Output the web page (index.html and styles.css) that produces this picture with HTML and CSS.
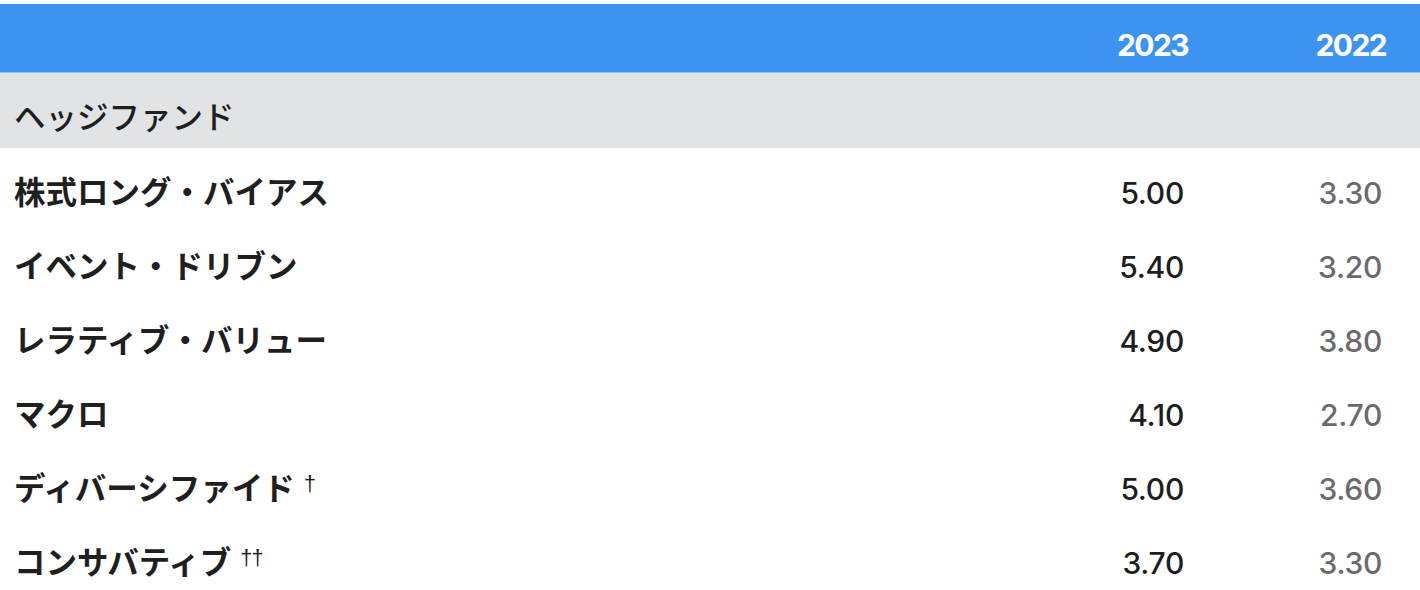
FILE: index.html
```html
<!DOCTYPE html>
<html lang="ja">
<head>
  <meta charset="UTF-8">
  <meta name="viewport" content="width=device-width, initial-scale=1.0">
  <title>ヘッジファンド</title>
  <link rel="stylesheet" href="styles.css">
</head>
<body>
  <div class="sheet">
    <div class="row head">
      <div class="label"></div>
      <div class="year">2023</div>
      <div class="year">2022</div>
    </div>

    <div class="row group">
      <div class="label">ヘッジファンド</div>
      <div></div>
      <div></div>
    </div>

    <div class="row">
      <div class="label">株式ロング・バイアス</div>
      <div class="num now">5.00</div>
      <div class="num prev">3.30</div>
    </div>
    <div class="row">
      <div class="label">イベント・ドリブン</div>
      <div class="num now">5.40</div>
      <div class="num prev">3.20</div>
    </div>
    <div class="row">
      <div class="label">レラティブ・バリュー</div>
      <div class="num now">4.90</div>
      <div class="num prev">3.80</div>
    </div>
    <div class="row">
      <div class="label">マクロ</div>
      <div class="num now">4.10</div>
      <div class="num prev">2.70</div>
    </div>
    <div class="row">
      <div class="label">ディバーシファイド<span class="mark">†</span></div>
      <div class="num now">5.00</div>
      <div class="num prev">3.60</div>
    </div>
    <div class="row">
      <div class="label">コンサバティブ<span class="mark">††</span></div>
      <div class="num now">3.70</div>
      <div class="num prev">3.30</div>
    </div>
  </div>
</body>
</html>
```

FILE: styles.css
```css
body {
  margin: 0;
  padding: 0;
  background-color: #fff;
  font-family: Inter, "Noto Sans CJK JP", sans-serif;
  color: #1d1d1f;
}

.sheet {
  padding-top: 4px;
}

.row {
  display: grid;
  grid-template-columns: 1fr 198px 198px;
  align-items: baseline;
  box-sizing: border-box;
  height: 74px;
  padding-top: 22px;
}

.row .label {
  padding-left: 14px;
  font-family: "Noto Sans CJK JP", sans-serif;
  font-size: 31.5px;
  font-weight: 700;
  line-height: 40px;
  color: #1f1f1f;
}

.head {
  height: 69px;
  padding-top: 21px;
  background-color: #3c94f0;
  border-bottom: 1px solid #8cc4f8;
}

.year {
  padding-right: 34px;
  text-align: right;
  font-size: 30px;
  font-weight: 700;
  letter-spacing: -1.6px;
  line-height: 40px;
  color: #fff;
}

.group {
  height: 75px;
  background-color: #e2e3e5;
}

.group .label {
  font-weight: 500;
}

.num {
  padding-right: 38px;
  text-align: right;
  font-size: 30px;
  font-weight: 450;
  letter-spacing: -0.3px;
  line-height: 40px;
}

.num.now {
  color: #1d1d1f;
}

.num.prev {
  color: #6b6b6e;
}

.mark {
  margin-left: 9px;
  font-family: "Liberation Sans", sans-serif;
  font-size: 22px;
  font-weight: 400;
  letter-spacing: -1px;
  line-height: 0;
  vertical-align: 9px;
}
```
